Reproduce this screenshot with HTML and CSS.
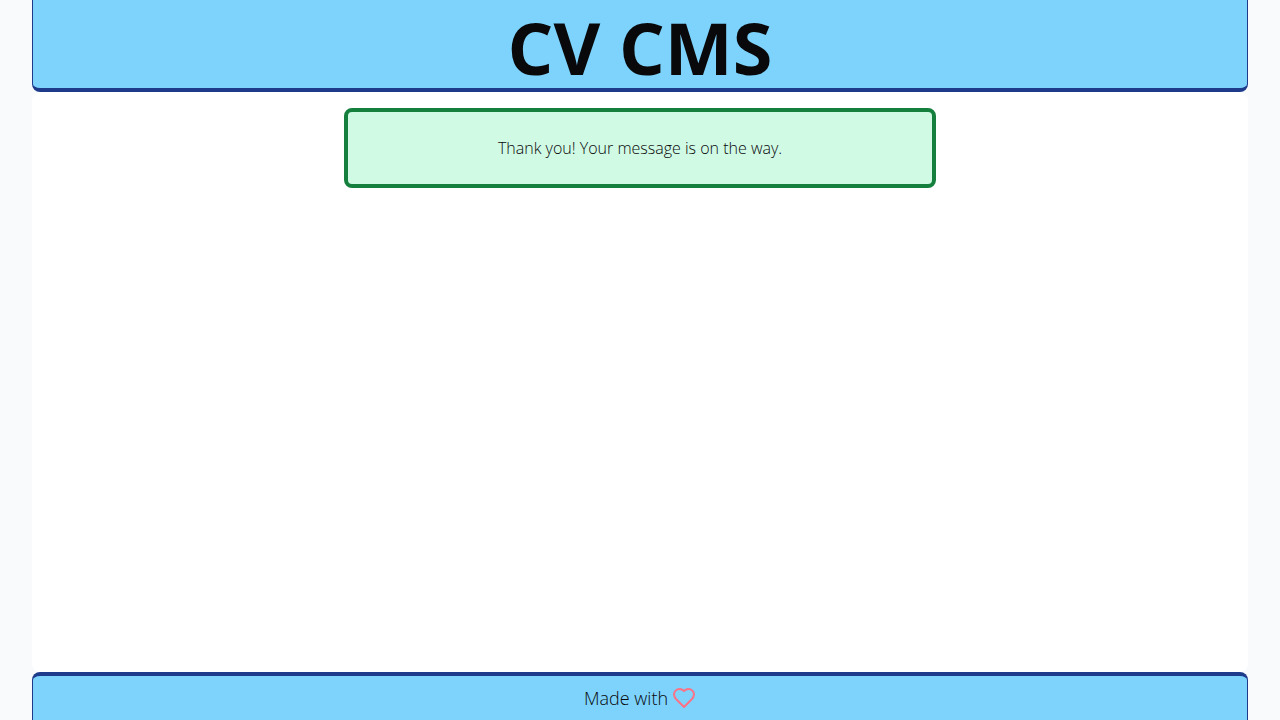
FILE: index.html
```html
<!DOCTYPE html>
<html lang="en">
<head>
  <meta charset="utf-8">
  <meta name="viewport" content="width=device-width, initial-scale=1">
  <title>CV CMS</title>
  <link rel="stylesheet" href="styles.css">
</head>
<body>
  <div class="page">
    <header class="header">
      <h1 class="title">CV CMS</h1>
    </header>
    <main class="main">
      <p class="notice" role="status">Thank you! Your message is on the way.</p>
    </main>
    <footer class="footer">
      <span>Made with</span>
      <svg class="heart" viewBox="0 0 24 24" role="img" aria-label="love">
        <path d="M19 14c1.49-1.46 3-3.21 3-5.5A5.5 5.5 0 0 0 16.5 3c-1.76 0-3 .5-4.5 2-1.5-1.5-2.74-2-4.5-2A5.5 5.5 0 0 0 2 8.5c0 2.3 1.5 4.05 3 5.5l7 7Z"/>
      </svg>
    </footer>
  </div>
</body>
</html>
```
FILE: styles.css
```css
*, *::before, *::after {
  box-sizing: border-box;
}

body {
  margin: 0;
  background: #f8fafc;
  color: #09090b;
  font-family: "Segoe UI", "Open Sans", "Noto Sans", sans-serif;
  font-size: 16px;
  font-weight: 300;
  line-height: 24px;
}

.page {
  display: flex;
  flex-direction: column;
  min-height: 100vh;
  margin: 0 32px;
}

.header {
  padding: 11px 8px 5px;
  background: #7dd3fc;
  border: solid #1e3a8a;
  border-width: 0 1px 4px;
  border-radius: 0 0 8px 8px;
}

.title {
  margin: 0;
  font-size: 72px;
  font-weight: 700;
  line-height: 72px;
  text-align: center;
}

.main {
  flex: 1;
  padding: 16px;
  background: #fff;
  border-radius: 8px;
}

.notice {
  width: 50%;
  margin: 0 auto;
  padding: 24px;
  background: #d1fae5;
  border: 4px solid #15803d;
  border-radius: 8px;
  text-align: center;
}

.footer {
  display: flex;
  align-items: center;
  justify-content: center;
  gap: 4px;
  padding: 8px;
  background: #7dd3fc;
  border: solid #1e3a8a;
  border-width: 4px 1px 0;
  border-radius: 8px 8px 0 0;
  font-size: 18px;
  line-height: 28px;
}

.heart {
  width: 24px;
  height: 24px;
  fill: none;
  stroke: #fb7185;
  stroke-width: 2;
  stroke-linecap: round;
  stroke-linejoin: round;
}
```
